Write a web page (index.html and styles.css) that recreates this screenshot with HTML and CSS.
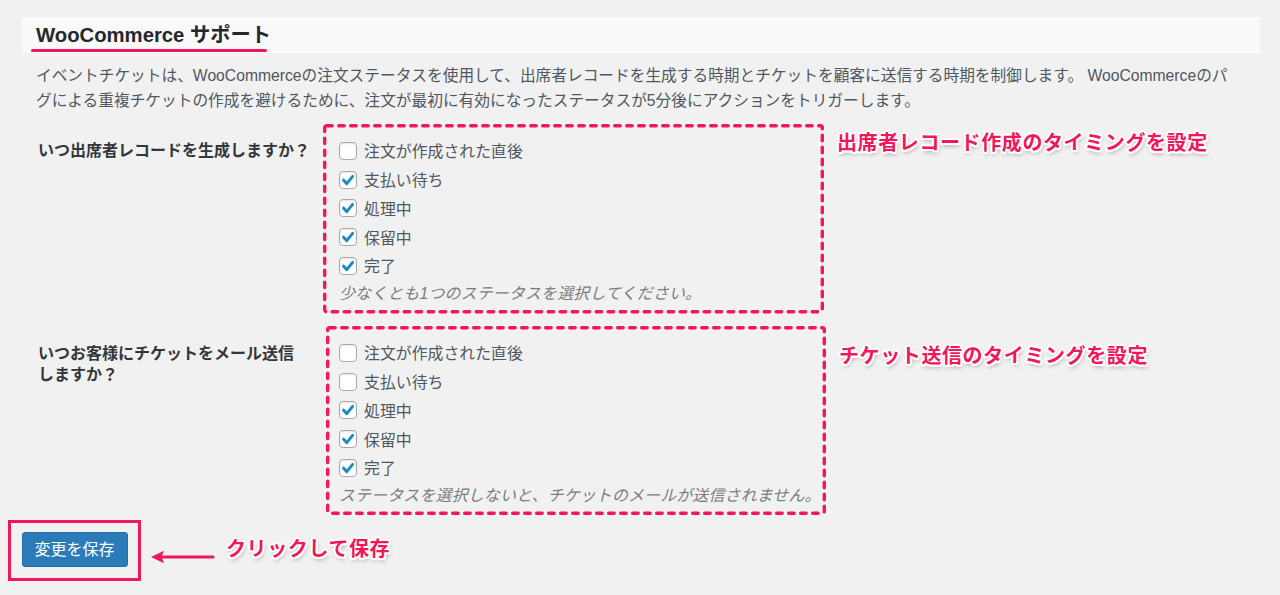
FILE: index.html
```html
<!DOCTYPE html>
<html lang="ja">
<head>
<meta charset="utf-8">
<title>WooCommerce サポート</title>
<link rel="stylesheet" href="styles.css">
</head>
<body>
<div class="page">
  <div class="title-band">
    <h2 class="title">WooCommerce サポート</h2>
  </div>
  <p class="intro">イベントチケットは、WooCommerceの注文ステータスを使用して、出席者レコードを生成する時期とチケットを顧客に送信する時期を制御します。 WooCommerceのパ<br>グによる重複チケットの作成を避けるために、注文が最初に有効になったステータスが5分後にアクションをトリガーします。</p>

  <div class="row row-1">
    <div class="label">いつ出席者レコードを生成しますか？</div>
    <div class="box box-1">
      <svg class="dash" aria-hidden="true"><rect class="dash-rect"></rect></svg>
      <div class="opt"><span class="cb"></span>注文が作成された直後</div>
      <div class="opt"><span class="cb"><svg viewBox="0 0 18 18"><path d="M4.6 9.2 L7.8 12.6 L13.6 5.4"/></svg></span>支払い待ち</div>
      <div class="opt"><span class="cb"><svg viewBox="0 0 18 18"><path d="M4.6 9.2 L7.8 12.6 L13.6 5.4"/></svg></span>処理中</div>
      <div class="opt"><span class="cb"><svg viewBox="0 0 18 18"><path d="M4.6 9.2 L7.8 12.6 L13.6 5.4"/></svg></span>保留中</div>
      <div class="opt"><span class="cb"><svg viewBox="0 0 18 18"><path d="M4.6 9.2 L7.8 12.6 L13.6 5.4"/></svg></span>完了</div>
      <p class="hint">少なくとも1つのステータスを選択してください。</p>
    </div>
    <div class="note note-1">出席者レコード作成のタイミングを設定</div>
  </div>

  <div class="row row-2">
    <div class="label label-2">いつお客様にチケットをメール送信<br>しますか？</div>
    <div class="box box-2">
      <svg class="dash" aria-hidden="true"><rect class="dash-rect"></rect></svg>
      <div class="opt"><span class="cb"></span>注文が作成された直後</div>
      <div class="opt"><span class="cb"></span>支払い待ち</div>
      <div class="opt"><span class="cb"><svg viewBox="0 0 18 18"><path d="M4.6 9.2 L7.8 12.6 L13.6 5.4"/></svg></span>処理中</div>
      <div class="opt"><span class="cb"><svg viewBox="0 0 18 18"><path d="M4.6 9.2 L7.8 12.6 L13.6 5.4"/></svg></span>保留中</div>
      <div class="opt"><span class="cb"><svg viewBox="0 0 18 18"><path d="M4.6 9.2 L7.8 12.6 L13.6 5.4"/></svg></span>完了</div>
      <p class="hint">ステータスを選択しないと、チケットのメールが送信されません。</p>
    </div>
    <div class="note note-2">チケット送信のタイミングを設定</div>
  </div>

  <div class="row row-3">
    <div class="save-frame"><button class="btn" type="button">変更を保存</button></div>
    <svg class="arrow" viewBox="0 0 64 16" aria-hidden="true">
      <line x1="9" y1="8" x2="62" y2="8"></line>
      <path d="M0 8 L13 1.8 L10.5 8 L13 14.2 Z"></path>
    </svg>
    <div class="note note-3">クリックして保存</div>
  </div>
</div>
</body>
</html>
```

FILE: styles.css
```css
* { box-sizing: border-box; }

html, body {
  margin: 0;
  padding: 0;
  background: #f1f1f1;
}

body {
  font-family: "Liberation Sans", "Noto Sans CJK JP", sans-serif;
  color: #444;
}

.page {
  padding-top: 17px;
  width: 1280px;
  height: 595px;
  overflow: hidden;
}

.title-band {
  margin: 0 20px 0 22px;
  height: 36px;
  background: #f9f9f9;
  display: flex;
  align-items: center;
  padding-left: 14px;
}

.title {
  position: relative;
  margin: 0;
  font-size: 20.3px;
  line-height: 24px;
  font-weight: 700;
  color: #23282d;
}

.title::after {
  content: "";
  position: absolute;
  left: -5px;
  right: 4px;
  bottom: -4.5px;
  height: 3px;
  border-radius: 2px;
  background: #f0175a;
}

.intro {
  margin: 11px 0 0 36px;
  font-size: 15.7px;
  line-height: 24.5px;
  color: #50575e;
  white-space: nowrap;
}

.row {
  display: flex;
  align-items: flex-start;
}

.row-1 { margin: 11px 0 0 22px; }
.row-2 { margin: 12px 0 0 22px; }
.row-3 { margin: 5.5px 0 0 8px; }

.label {
  flex: 0 0 300.5px;
  padding: 15.5px 0 0 16px;
  font-size: 16px;
  line-height: 21px;
  font-weight: 700;
  color: #32373c;
}

.label-2 { padding-top: 17px; }

.box {
  position: relative;
  flex: 0 0 auto;
}

.box-1 {
  width: 501px;
  height: 189.5px;
  padding: 12.6px 0 0 16.5px;
}

.box-2 {
  margin-left: 3px;
  width: 500px;
  height: 189px;
  padding: 13.1px 0 0 13.5px;
}

.dash {
  position: absolute;
  left: 0;
  top: 0;
  width: 100%;
  height: 100%;
  overflow: visible;
  pointer-events: none;
}

.dash-rect {
  x: 1.7px;
  y: 1.7px;
  width: calc(100% - 3.4px);
  height: calc(100% - 3.4px);
  rx: 2px;
  fill: none;
  stroke: #f0175a;
  stroke-width: 3.4px;
  stroke-dasharray: 5.5 6.5;
  stroke-linecap: round;
}

.opt {
  display: flex;
  align-items: center;
  height: 28.75px;
  font-size: 15.9px;
  color: #50575e;
}

.cb {
  flex: 0 0 18px;
  width: 18px;
  height: 18px;
  margin-right: 7px;
  border: 1px solid #a7aaad;
  border-radius: 4px;
  background: #fff;
  box-shadow: inset 0 1px 2px rgba(0, 0, 0, 0.1);
  display: flex;
  align-items: center;
  justify-content: center;
}

.cb svg {
  width: 18px;
  height: 18px;
  flex: 0 0 18px;
}

.cb path {
  fill: none;
  stroke: #1e8cbe;
  stroke-width: 3;
  stroke-linecap: round;
  stroke-linejoin: round;
}

.hint {
  margin: 2px 0 0 0;
  font-size: 15.9px;
  letter-spacing: 0.2px;
  line-height: 24px;
  font-style: italic;
  color: #787c82;
  white-space: nowrap;
}

.note {
  font-size: 20px;
  line-height: 26px;
  font-weight: 700;
  color: #f0175a;
  letter-spacing: 0.6px;
  white-space: nowrap;
  text-shadow:
    2px 0 0 #fff, -2px 0 0 #fff, 0 2px 0 #fff, 0 -2px 0 #fff,
    1.5px 1.5px 0 #fff, -1.5px 1.5px 0 #fff, 1.5px -1.5px 0 #fff, -1.5px -1.5px 0 #fff,
    1px 3px 4px rgba(0, 0, 0, 0.35);
}

.note-1 { margin: 6px 0 0 13.5px; }
.note-2 { margin: 17.5px 0 0 13.5px; }
.note-3 { margin: 16px 0 0 11px; }

.save-frame {
  border: 3.5px solid #f0175a;
  padding: 8.5px 10.5px 11.5px 10.5px;
}

.btn {
  display: block;
  width: 106px;
  height: 35px;
  padding: 0;
  border: 1px solid #246ea6;
  border-radius: 3px;
  background: #2b7bb9;
  color: #fff;
  font-family: "Liberation Sans", "Noto Sans CJK JP", sans-serif;
  font-size: 16px;
  line-height: 33px;
  text-align: center;
}

.arrow {
  flex: 0 0 64px;
  width: 64px;
  height: 16px;
  margin: 29px 0 0 10px;
}

.arrow line {
  stroke: #f0175a;
  stroke-width: 3.2;
  stroke-linecap: round;
}

.arrow path {
  fill: #f0175a;
}
```
